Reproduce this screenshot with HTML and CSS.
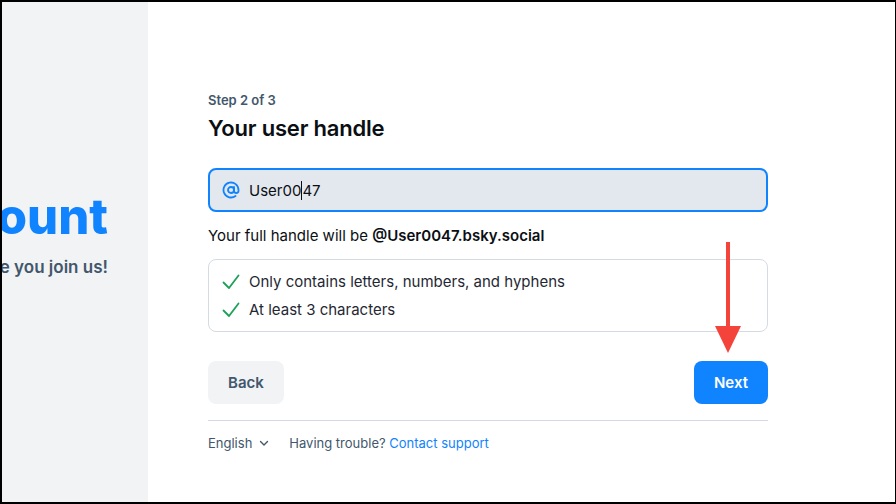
FILE: index.html
```html
<!DOCTYPE html>
<html lang="en">
<head>
<meta charset="utf-8">
<title>Create an account</title>
<link rel="stylesheet" href="styles.css">
</head>
<body>
<div class="frame">
  <aside class="side">
    <div class="side-title">Create an account</div>
    <div class="side-sub">We're so excited to have you join us!</div>
  </aside>
  <main class="main">
    <div class="form">
      <div class="step">Step 2 of 3</div>
      <h1 class="heading">Your user handle</h1>
      <div class="input">
        <svg class="at" viewBox="0 0 24 24" width="18" height="18"><circle cx="12" cy="12" r="4" fill="none" stroke="currentColor" stroke-width="2.4"/><path d="M16 8v5a3 3 0 0 0 6 0v-1a10 10 0 1 0-3.920 7.94" fill="none" stroke="currentColor" stroke-width="2.4" stroke-linecap="round"/></svg>
        <span class="value">User00<span class="caret"></span>47</span>
      </div>
      <p class="full">Your full handle will be <b>@User0047.bsky.social</b></p>
      <div class="checks">
        <div class="check"><svg viewBox="0 0 18 18" width="18" height="18"><polyline points="1.5,9.5 7,15 16.5,2.5" fill="none" stroke="currentColor" stroke-width="1.8" stroke-linecap="round" stroke-linejoin="round"/></svg><span>Only contains letters, numbers, and hyphens</span></div>
        <div class="check"><svg viewBox="0 0 18 18" width="18" height="18"><polyline points="1.5,9.5 7,15 16.5,2.5" fill="none" stroke="currentColor" stroke-width="1.8" stroke-linecap="round" stroke-linejoin="round"/></svg><span>At least 3 characters</span></div>
      </div>
      <div class="actions">
        <button class="btn back">Back</button>
        <button class="btn next">Next</button>
      </div>
      <div class="divider"></div>
      <div class="footer">
        <span class="lang">English <svg viewBox="0 0 10 10" width="10" height="10"><polyline points="1.5,3.5 5,7 8.5,3.5" fill="none" stroke="currentColor" stroke-width="1.4" stroke-linecap="round" stroke-linejoin="round"/></svg></span>
        <span class="help">Having trouble? <a class="link">Contact support</a></span>
      </div>
    </div>
    <svg class="arrow" viewBox="0 0 26 112" width="26" height="112"><rect x="11" y="0" width="4" height="86" fill="#f4433a"/><polygon points="0,84 26,84 13,111" fill="#f4433a"/></svg>
  </main>
</div>
</body>
</html>
```

FILE: styles.css
```css
* { box-sizing: border-box; }
html, body { margin: 0; padding: 0; }
body {
  font-family: Inter, "Noto Sans", "Liberation Sans", sans-serif;
  color: #0b0f14;
  background: #fff;
}
.frame {
  width: 896px;
  height: 504px;
  border-style: solid;
  border-color: #000;
  border-width: 2px 1px 2px 2px;
  display: flex;
  overflow: hidden;
}
.side {
  width: 146px;
  flex: none;
  background: #f1f3f5;
  display: flex;
  flex-direction: column;
  align-items: flex-end;
  padding: 186px 40px 0 0;
  overflow: hidden;
}
.side-title {
  white-space: nowrap;
  font-size: 49px;
  line-height: 58px;
  font-weight: 800;
  color: #1083fe;
  letter-spacing: 0;
}
.side-sub {
  white-space: nowrap;
  margin-top: 10px;
  font-size: 17px;
  line-height: 22px;
  font-weight: 600;
  color: #42576c;
}
.main {
  flex: 1;
  position: relative;
  padding: 90px 0 0 60px;
}
.form {
  width: 560px;
  display: flex;
  flex-direction: column;
}
.step {
  font-size: 13px;
  line-height: 17px;
  font-weight: 600;
  color: #42576c;
}
.heading {
  margin: 5px 0 0;
  font-size: 22px;
  line-height: 28px;
  font-weight: 600;
  letter-spacing: -0.2px;
}
.input {
  margin-top: 26px;
  height: 44px;
  border: 2px solid #1083fe;
  border-radius: 8px;
  background: #e3e8ee;
  display: flex;
  align-items: center;
  padding: 0 12px;
  gap: 9px;
}
.at { color: #1083fe; flex: none; }
.value { font-size: 15px; color: #0b0f14; display: inline-flex; align-items: center; }
.caret {
  display: inline-block;
  width: 1px;
  height: 19px;
  background: #0b0f14;
}
.full {
  margin: 14px 0 0;
  font-size: 15px;
  line-height: 20px;
  color: #0b0f14;
}
.full b { font-weight: 600; }
.checks {
  margin-top: 13px;
  border: 1px solid #d4dbe2;
  border-radius: 8px;
  padding: 12px 14px 11px 13px;
  display: flex;
  flex-direction: column;
  gap: 8px;
}
.check {
  display: flex;
  align-items: center;
  gap: 9px;
  font-size: 15px;
  line-height: 20px;
  color: #1f2833;
}
.check svg { color: #1ea05a; flex: none; }
.actions {
  margin-top: 29px;
  display: flex;
  justify-content: space-between;
}
.btn {
  height: 43px;
  border: 0;
  border-radius: 8px;
  font-family: inherit;
  font-size: 15px;
  font-weight: 600;
  padding: 0 19px;
}
.back { background: #f1f3f5; color: #42576c; width: 76px; }
.next { background: #1083fe; color: #fff; width: 74px; }
.divider {
  margin-top: 16px;
  height: 1px;
  background: #d4dbe2;
}
.footer {
  margin-top: 13px;
  display: flex;
  align-items: center;
  gap: 20px;
  font-size: 13px;
  line-height: 18px;
  color: #42576c;
}
.lang { display: inline-flex; align-items: center; gap: 7px; }
.link { color: #1083fe; }
.arrow {
  position: absolute;
  left: 567px;
  top: 240px;
}
```
